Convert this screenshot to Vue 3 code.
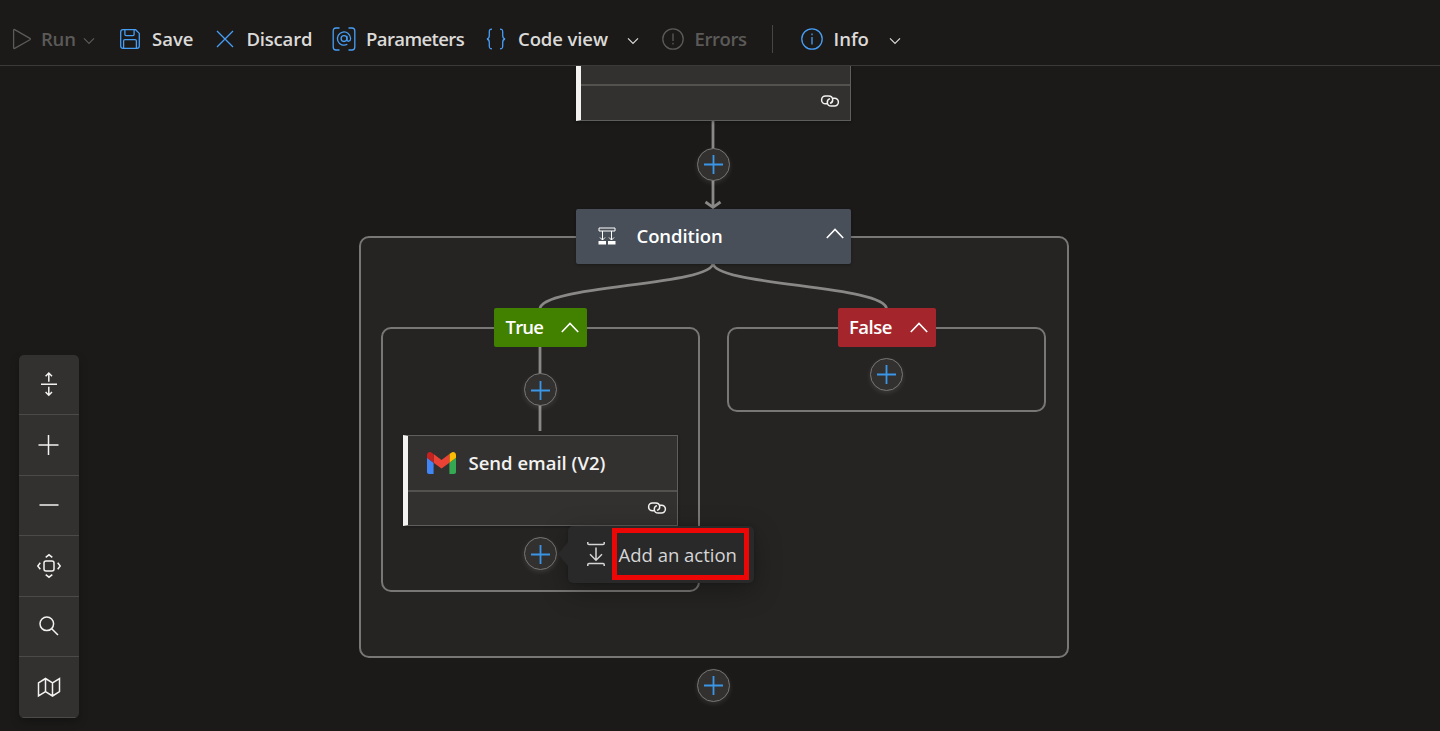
<script setup>
const inserts = ['after-trigger', 'in-true', 'in-false', 'after-email', 'after-scope']
const links = ['trigger-link', 'email-link']
</script>

<template>
  <div class="designer">
    <header class="toolbar">
      <button class="cmd run off">
        <svg width="20" height="22" viewBox="0 0 20 22"><path d="M1.600 2.300v17.400c0 .7.5 1 1.100.7l15.200-8.600c.6-.4.6-1 0-1.400L2.700 1.600c-.6-.3-1.100 0-1.100.7Z" /></svg>
        <span>Run</span>
        <svg class="chev" width="12" height="8" viewBox="0 0 12 8"><path d="M1 1.300l5 5 5-5" /></svg>
      </button>
      <button class="cmd save">
        <svg width="20" height="20" viewBox="0 0 20 20"><path d="M3 .7h12.600L19.300 4.400V17q0 2.300-2.300 2.300H3Q.7 19.300.7 17V3Q.7.7 3 .7ZM4.900.9v4.700q0 1.100 1.100 1.100h7q1.100 0 1.100-1.100V.9M3.600 19v-7q0-1.300 1.300-1.300h10.200q1.300 0 1.300 1.300v7" /></svg>
        <span>Save</span>
      </button>
      <button class="cmd discard">
        <svg width="18" height="18" viewBox="0 0 18 18"><path d="M1 1l16 16M17 1L1 17" /></svg>
        <span>Discard</span>
      </button>
      <button class="cmd params">
        <svg width="24" height="24" viewBox="0 0 24 24"><path d="M7.500 1H4Q1.200 1 1.200 4v16q0 3 2.800 3h3.500M16.500 1H20q2.800 0 2.800 3v16q0 3-2.800 3h-3.500" /><circle cx="12" cy="11.600" r="2.900" /><path d="M14.900 8.700v3.600c0 3 3.700 2.400 3.700-.8a6.600 6.600 0 1 0-3.300 5.800" /></svg>
        <span>Parameters</span>
      </button>
      <button class="cmd code">
        <svg width="20" height="22" viewBox="0 0 20 22"><path d="M6 1.200C3.500 1.200 3.300 2 3.300 4v3.600C3.300 9.800 2.800 10.600 1 11c1.800.4 2.300 1.200 2.300 3.400V18c0 2 .2 2.800 2.700 2.800M14 1.200c2.500 0 2.700.8 2.700 2.800v3.600c0 2.200.5 3 2.300 3.400-1.800.4-2.300 1.200-2.300 3.400V18c0 2-.2 2.800-2.700 2.800" /></svg>
        <span>Code view</span>
        <svg class="chev" width="12" height="8" viewBox="0 0 12 8"><path d="M1 1.300l5 5 5-5" /></svg>
      </button>
      <button class="cmd errors off">
        <svg width="22" height="22" viewBox="0 0 22 22"><circle cx="11" cy="11" r="10.200" /><path d="M11 5.500v7.600M11 14.700v1.700" /></svg>
        <span>Errors</span>
      </button>
      <i class="rule"></i>
      <button class="cmd info">
        <svg width="22" height="22" viewBox="0 0 22 22"><circle cx="11" cy="11" r="10.200" /><path d="M11 9v7.500M11 5.600v1.700" /></svg>
        <span>Info</span>
        <svg class="chev" width="12" height="8" viewBox="0 0 12 8"><path d="M1 1.300l5 5 5-5" /></svg>
      </button>
    </header>

    <main class="canvas">
      <section class="scope outer"></section>
      <section class="scope yes"></section>
      <section class="scope no"></section>

      <svg class="edges" width="1440" height="665" viewBox="0 66 1440 665">
        <path d="M713 121V207M705.500 202L713 207.300L720.500 202M540 347V431M713 263C713 286 540 285 540 309M713 263C713 286 886.500 285 886.500 309" />
      </svg>

      <article class="card trigger"><div class="card-head"></div><div class="card-foot"></div></article>

      <article class="condition">
        <svg class="cond-icon" width="18" height="18" viewBox="0 0 18 18"><path d="M1 1h16v3H1ZM4.500 4v9M13.500 4v9M2 10.500l2.500 2.500L7 10.500M11 10.500l2.500 2.500 2.500-2.500" /><path class="solid" d="M.5 14H8v3.500H.5ZM10 14h7.500v3.500H10Z" /></svg>
        <span>Condition</span>
        <svg class="caret" width="18" height="11" viewBox="0 0 18 11"><path d="M.8 10L9 1.500l8.200 8.500" /></svg>
      </article>

      <div class="tag true"><span>True</span><svg class="caret" width="18" height="11" viewBox="0 0 18 11"><path d="M.8 10L9 1.500l8.200 8.500" /></svg></div>
      <div class="tag false"><span>False</span><svg class="caret" width="18" height="11" viewBox="0 0 18 11"><path d="M.8 10L9 1.500l8.200 8.500" /></svg></div>

      <article class="card email">
        <div class="card-head">
          <svg width="29" height="22" viewBox="52 42 88 66"><g stroke="none"><path fill="#4285f4" d="M58 108h14V74L52 59v43c0 3.320 2.690 6 6 6" /><path fill="#34a853" d="M120 108h14c3.320 0 6-2.690 6-6V59l-20 15" /><path fill="#fbbc04" d="M120 48v26l20-15v-8c0-7.420-8.470-11.650-14.400-7.200" /><path fill="#ea4335" d="M72 74V48l24 18 24-18v26L96 92" /><path fill="#c5221f" d="M52 51v8l20 15V48l-5.600-4.200c-5.940-4.450-14.400-.22-14.400 7.200" /></g></svg>
          <span>Send email (V2)</span>
        </div>
        <div class="card-foot"></div>
      </article>

      <svg v-for="l in links" :key="l" class="link" :class="l" width="18" height="12" viewBox="0 0 18 12"><path d="M6 8.800H4.500a3.900 3.900 0 0 1 0-7.800h3.300c4.700 0 5.200 6.200 1.200 7.400M12 3.200h1.500a3.900 3.900 0 0 1 0 7.800h-3.300C5.500 11 5 4.800 9 3.600" /></svg>

      <button v-for="p in inserts" :key="p" class="plus" :class="p">
        <svg width="19" height="19" viewBox="0 0 19 19"><path d="M0 9.500h19M9.500 0v19" /></svg>
      </button>

      <div class="menu">
        <svg width="18" height="26" viewBox="0 0 18 26"><path d="M.8 1v1.500q0 1 1.200 1h14q1.200 0 1.200-1V1M.8 25v-1.500q0-1 1.200-1h14q1.200 0 1.200 1V25M9 6.500v12.500M3 13.300l6 6 6-6" /></svg>
        <span>Add an action</span>
      </div>
    </main>

    <nav class="controls">
      <button><svg width="24" height="24" viewBox="0 0 24 24"><path d="M4 12.200h16M11.800 9.700V1.200M8.600 4.200l3.200-3.200L15 4.200M11.800 14.700v8.500M8.600 20l3.200 3.200L15 20" /></svg></button>
      <button><svg width="24" height="24" viewBox="0 0 24 24"><path d="M1.500 12h20M11.500 2v20" /></svg></button>
      <button><svg width="24" height="24" viewBox="0 0 24 24"><path d="M2.500 12h19" /></svg></button>
      <button><svg width="24" height="24" viewBox="0 0 24 24"><rect x="7" y="7" width="10" height="10" rx="2" /><path d="M8.700 3.300L12 .8l3.300 2.500M8.700 20.700l3.300 2.500 3.300-2.500M3.300 8.700L.8 12l2.500 3.300M20.700 8.700l2.500 3.300-2.500 3.300" /></svg></button>
      <button><svg width="24" height="24" viewBox="0 0 24 24"><circle cx="9.800" cy="9.800" r="6.800" /><path d="M14.700 14.700l6.300 6.300" /></svg></button>
      <button><svg width="24" height="24" viewBox="0 0 24 24"><path d="M1.500 7.800L8.500 3.500l7 4.300L22.500 3.500v13.200l-7 4.300-7-4.300-7 4.300ZM8.500 3.500v13.200M15.500 7.800v13.200" /></svg></button>
    </nav>
  </div>
</template>

<style>
body { margin: 0; background: #1b1a19; overflow: hidden; }
</style>

<style scoped>
.designer { position: relative; width: 1440px; height: 731px; background: #1b1a19; color: #f3f2f1; font: 400 18.500px/24px "Open Sans", "Noto Sans", sans-serif; overflow: hidden; }
button { appearance: none; border: 0; padding: 0; margin: 0; background: none; color: inherit; font: inherit; text-align: left; }
svg { display: block; flex: none; fill: none; stroke: currentColor; stroke-width: 1.300; overflow: visible; }
span { white-space: nowrap; }

.toolbar { height: 65px; border-bottom: 1px solid #3b3a39; box-sizing: content-box; display: flex; align-items: flex-start; }
.cmd { flex: none; display: flex; align-items: center; height: 24px; margin-top: 27px; font-weight: 600; color: #dcdad8; }
.cmd > svg:first-child { color: #479ef5; }
.cmd.off, .cmd.off > svg:first-child { color: #5c5a58; }
.cmd .chev { stroke-width: 1.200; position: relative; top: 1.500px; }
.run { width: 120px; padding-left: 11.500px; }
.run span { width: 42px; margin-left: 9.500px; letter-spacing: -.2px; }
.save { width: 96px; }
.save span { margin-left: 12px; }
.discard { width: 116px; }
.discard span { margin-left: 12.500px; letter-spacing: -.2px; }
.params { width: 154px; }
.params span { margin-left: 10px; letter-spacing: -.6px; }
.code { width: 176px; }
.code span { width: 109px; margin-left: 12px; letter-spacing: -.1px; }
.errors { width: 110px; }
.errors span { margin-left: 10.500px; letter-spacing: -.4px; }
.rule { width: 1px; height: 28px; margin: 25px 27.500px 0 0; background: #484644; }
.info span { width: 55px; margin-left: 11px; }

.canvas { position: absolute; left: 0; top: 66px; width: 1440px; height: 665px; overflow: hidden; }
.canvas > * { position: absolute; box-sizing: border-box; }
.scope { border: 2px solid #797775; border-radius: 10px; background: #252423; }
.outer { left: 359px; top: 170px; width: 710px; height: 422px; }
.yes { left: 381px; top: 261px; width: 319px; height: 265px; }
.no { left: 727.400px; top: 261px; width: 319px; height: 85px; }
.edges { left: 0; top: 0; color: #8a8886; stroke-width: 2.800; }

.card { width: 275px; height: 92px; border: 1px solid #605e5c; border-left: 5px solid #f3f2f1; background: #323130; display: flex; flex-direction: column; box-shadow: 0 1px 3px rgba(0, 0, 0, .3); }
.card-head { height: 54px; flex: none; border-bottom: 2px solid #54524f; display: flex; align-items: center; padding-left: 19px; }
.card-head span { font-weight: 600; margin-left: 12.500px; }
.trigger { left: 576px; top: -37px; }
.email { left: 403px; top: 369px; height: 91px; }
.link { color: #f3f2f1; stroke-width: 1.500; }
.trigger-link { left: 821px; top: 28.500px; }
.email-link { left: 647.500px; top: 435.500px; }

.condition { left: 576px; top: 143px; width: 275px; height: 55px; border-radius: 2px; background: #484f58; color: #fff; display: flex; align-items: center; padding: 0 7px 1px 22px; font-weight: 600; box-shadow: 0 1px 3px rgba(0, 0, 0, .3); }
.condition span { flex: 1; margin-left: 20.500px; letter-spacing: -.1px; }
.condition .caret { position: relative; top: -3px; }
.cond-icon { stroke-width: 1; }
.cond-icon .solid { fill: #fff; stroke: none; }
.caret { stroke-width: 1.600; }
.tag { display: flex; align-items: center; justify-content: space-between; height: 39px; top: 242px; padding: 0 8px 1px 11.500px; border-radius: 2px; color: #fff; font-weight: 600; }
.true { left: 494px; width: 93px; background: #428000; }
.true span { letter-spacing: -.8px; }
.false { left: 838.400px; width: 97.500px; background: #a4262c; padding: 0 7.500px 1px 10.500px; }
.false span { letter-spacing: -.5px; }

.plus { width: 33px; height: 33px; border: 1px solid #797775; border-radius: 50%; background: #323130; color: #3a96e6; display: flex; align-items: center; justify-content: center; box-shadow: 0 2px 5px rgba(255, 255, 255, .1); }
.plus svg { stroke-width: 1.800; }
.after-trigger { left: 697px; top: 82px; }
.after-trigger svg, .in-false svg { position: relative; top: -.5px; }
.in-true { left: 524px; top: 307.400px; }
.in-true svg { position: relative; top: .4px; }
.in-false { left: 870.400px; top: 292px; }
.after-email { left: 524px; top: 471.400px; }
.after-email svg { position: relative; top: .4px; }
.after-scope { left: 697px; top: 603px; }

.menu { left: 568px; top: 460px; width: 186px; height: 57px; border-radius: 5px; background: #292929; color: #d6d6d6; display: flex; align-items: center; padding-left: 19px; box-shadow: 0 8px 28px rgba(0, 0, 0, .3), 0 0 3px rgba(0, 0, 0, .2); }
.menu::before { content: ""; position: absolute; left: -10px; top: 16px; border: solid transparent; border-width: 12px 10px 12px 0; border-right-color: #292929; }
.menu::after { content: ""; position: absolute; left: 44px; top: 2px; width: 127px; height: 42px; border: 5px solid #ec0606; }
.menu svg { stroke-width: 1.500; position: relative; top: -.5px; }
.menu span { margin-left: 13.500px; }

.controls { position: absolute; left: 19px; top: 354.500px; width: 60px; height: 363px; display: flex; flex-direction: column; border-radius: 5px; background: #323130; overflow: hidden; box-shadow: 0 4px 8px rgba(0, 0, 0, .25); }
.controls button { flex: 1; border-bottom: 1px solid #4c4a48; display: flex; align-items: center; justify-content: center; }
.controls svg { stroke-width: 1.500; }
</style>
